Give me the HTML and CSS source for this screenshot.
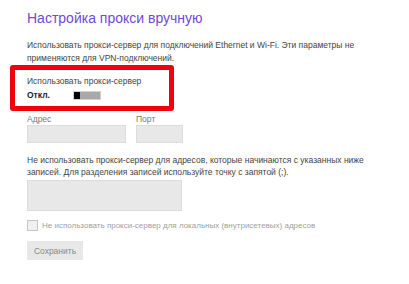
FILE: index.html
```html
<!DOCTYPE html>
<html lang="ru">
<head>
    <meta charset="UTF-8">
    <meta name="viewport" content="width=device-width, initial-scale=1.0">
    <title>Настройка прокси вручную</title>
    <link rel="stylesheet" href="styles.css">
</head>
<body>
    <div class="page">
        <h1 class="title">Настройка прокси вручную</h1>
        <p class="intro">Использовать прокси-сервер для подключений Ethernet и Wi-Fi. Эти параметры не применяются для VPN-подключений.</p>
        <div class="highlight">
            <div class="caption">Использовать прокси-сервер</div>
            <div class="toggle-row">
                <span class="state">Откл.</span>
                <span class="toggle"><span class="thumb"></span></span>
            </div>
        </div>
        <div class="fields">
            <div class="field">
                <div class="caption muted">Адрес</div>
                <div class="input address"></div>
            </div>
            <div class="field">
                <div class="caption muted">Порт</div>
                <div class="input port"></div>
            </div>
        </div>
        <p class="note">Не использовать прокси-сервер для адресов, которые начинаются с указанных ниже записей. Для разделения записей используйте точку с запятой (;).</p>
        <div class="input exceptions"></div>
        <label class="check">
            <span class="box"></span>
            <span>Не использовать прокси-сервер для локальных (внутрисетевых) адресов</span>
        </label>
        <button class="save">Сохранить</button>
    </div>
</body>
</html>
```

FILE: styles.css
```css
body {
    margin: 0;
    background: #fff;
    font-family: "Liberation Sans", Arial, sans-serif;
    color: #333;
}
.page {
    padding: 6px 0 0 27px;
}
.title {
    margin: 0;
    font-size: 14px;
    font-weight: normal;
    color: #7049d6;
    line-height: 24px;
}
.intro {
    margin: 9px 0 0;
    width: 340px;
    font-size: 8.5px;
    line-height: 13px;
    color: #444;
}
.highlight {
    margin: 0 0 0 -17px;
    width: 142px;
    padding: 5px 0 4px 12px;
    border: 5px solid #f0000c;
    border-radius: 3px;
}
.caption {
    font-size: 8.5px;
    line-height: 12px;
    color: #444;
}
.muted {
    color: #777;
}
.toggle-row {
    display: flex;
    align-items: center;
    margin-top: 1px;
    height: 14px;
}
.state {
    width: 46px;
    font-size: 8.5px;
    font-weight: bold;
    color: #222;
}
.toggle {
    display: flex;
    width: 28px;
    height: 9px;
    background: #a8a8a8;
    border: 1px solid #d0d0d0;
    box-sizing: border-box;
}
.thumb {
    width: 6px;
    height: 100%;
    background: #000;
}
.fields {
    display: flex;
    gap: 10px;
    margin-top: 2px;
}
.input {
    background: #e8e8e8;
    border: 1px solid #dcdcdc;
    box-sizing: border-box;
}
.address {
    width: 99px;
    height: 18px;
}
.port {
    width: 47px;
    height: 18px;
}
.note {
    margin: 11px 0 0;
    width: 345px;
    font-size: 8.5px;
    line-height: 12px;
    color: #444;
}
.exceptions {
    width: 155px;
    height: 31px;
    margin-top: 2px;
}
.check {
    display: flex;
    align-items: center;
    gap: 4px;
    margin-top: 9px;
    font-size: 8px;
    color: #a0a0a0;
}
.box {
    width: 11px;
    height: 11px;
    border: 1px solid #c6c6c6;
    background: #f0f0f0;
    box-sizing: border-box;
}
.save {
    display: block;
    margin-top: 10px;
    width: 56px;
    height: 19px;
    padding: 0;
    border: 0;
    background: #e8e8e8;
    font-family: inherit;
    font-size: 8.5px;
    color: #8a8a8a;
}
```
